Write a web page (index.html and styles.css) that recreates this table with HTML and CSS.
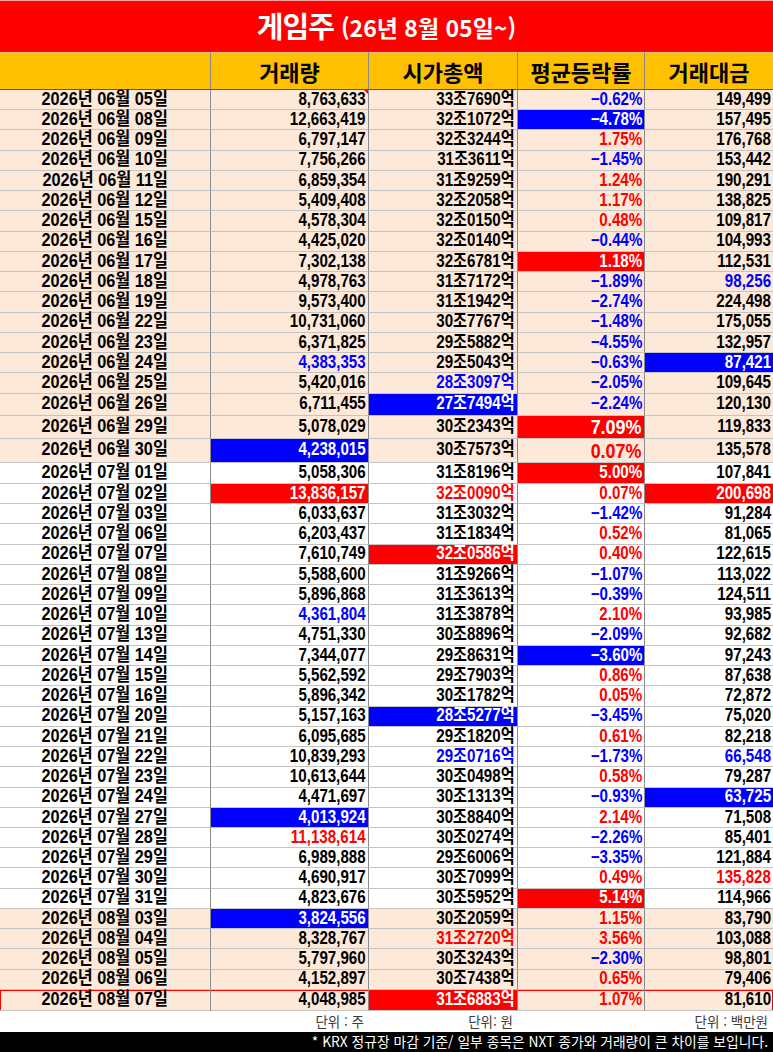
FILE: index.html
```html
<!DOCTYPE html>
<html lang="ko">
<head>
<meta charset="utf-8">
<title>게임주</title>
<link rel="stylesheet" href="styles.css">
</head>
<body>
<div class="sheet">
  <div class="title"><span class="t-main">게임주</span><span class="t-sub">(26년 8월 05일~)</span></div>
  <div class="row head"><div class="c"></div><div class="c">거래량</div><div class="c">시가총액</div><div class="c">평균등락률</div><div class="c">거래대금</div></div>

  <div class="row p"><div class="c d"><span>2026년 06월 05일</span></div><div class="c"><span>8,763,633</span><b class="note"></b></div><div class="c"><span>33조7690억</span></div><div class="c bt"><span>−0.62%</span></div><div class="c"><span>149,499</span></div></div>
  <div class="row p"><div class="c d"><span>2026년 06월 08일</span></div><div class="c"><span>12,663,419</span></div><div class="c"><span>32조1072억</span></div><div class="c bb"><span>−4.78%</span></div><div class="c"><span>157,495</span></div></div>
  <div class="row p"><div class="c d"><span>2026년 06월 09일</span></div><div class="c"><span>6,797,147</span></div><div class="c"><span>32조3244억</span></div><div class="c rt"><span>1.75%</span></div><div class="c"><span>176,768</span></div></div>
  <div class="row p"><div class="c d"><span>2026년 06월 10일</span></div><div class="c"><span>7,756,266</span></div><div class="c"><span>31조3611억</span></div><div class="c bt"><span>−1.45%</span></div><div class="c"><span>153,442</span></div></div>
  <div class="row p"><div class="c d"><span>2026년 06월 11일</span></div><div class="c"><span>6,859,354</span></div><div class="c"><span>31조9259억</span></div><div class="c rt"><span>1.24%</span></div><div class="c"><span>190,291</span></div></div>
  <div class="row p"><div class="c d"><span>2026년 06월 12일</span></div><div class="c"><span>5,409,408</span></div><div class="c"><span>32조2058억</span></div><div class="c rt"><span>1.17%</span></div><div class="c"><span>138,825</span></div></div>
  <div class="row p"><div class="c d"><span>2026년 06월 15일</span></div><div class="c"><span>4,578,304</span></div><div class="c"><span>32조0150억</span></div><div class="c rt"><span>0.48%</span></div><div class="c"><span>109,817</span></div></div>
  <div class="row p"><div class="c d"><span>2026년 06월 16일</span></div><div class="c"><span>4,425,020</span></div><div class="c"><span>32조0140억</span></div><div class="c bt"><span>−0.44%</span></div><div class="c"><span>104,993</span></div></div>
  <div class="row p"><div class="c d"><span>2026년 06월 17일</span></div><div class="c"><span>7,302,138</span></div><div class="c"><span>32조6781억</span></div><div class="c rb"><span>1.18%</span></div><div class="c"><span>112,531</span></div></div>
  <div class="row p"><div class="c d"><span>2026년 06월 18일</span></div><div class="c"><span>4,978,763</span></div><div class="c"><span>31조7172억</span></div><div class="c bt"><span>−1.89%</span></div><div class="c bt"><span>98,256</span></div></div>
  <div class="row p"><div class="c d"><span>2026년 06월 19일</span></div><div class="c"><span>9,573,400</span></div><div class="c"><span>31조1942억</span></div><div class="c bt"><span>−2.74%</span></div><div class="c"><span>224,498</span></div></div>
  <div class="row p"><div class="c d"><span>2026년 06월 22일</span></div><div class="c"><span>10,731,060</span></div><div class="c"><span>30조7767억</span></div><div class="c bt"><span>−1.48%</span></div><div class="c"><span>175,055</span></div></div>
  <div class="row p"><div class="c d"><span>2026년 06월 23일</span></div><div class="c"><span>6,371,825</span></div><div class="c"><span>29조5882억</span></div><div class="c bt"><span>−4.55%</span></div><div class="c"><span>132,957</span></div></div>
  <div class="row p"><div class="c d"><span>2026년 06월 24일</span></div><div class="c bt"><span>4,383,353</span></div><div class="c"><span>29조5043억</span></div><div class="c bt"><span>−0.63%</span></div><div class="c bb"><span>87,421</span></div></div>
  <div class="row p"><div class="c d"><span>2026년 06월 25일</span></div><div class="c"><span>5,420,016</span></div><div class="c bt"><span>28조3097억</span></div><div class="c bt"><span>−2.05%</span></div><div class="c"><span>109,645</span></div></div>
  <div class="row p h225"><div class="c d"><span>2026년 06월 26일</span></div><div class="c"><span>6,711,455</span></div><div class="c bb"><span>27조7494억</span></div><div class="c bt"><span>−2.24%</span></div><div class="c"><span>120,130</span></div></div>
  <div class="row p h225"><div class="c d"><span>2026년 06월 29일</span></div><div class="c"><span>5,078,029</span></div><div class="c"><span>30조2343억</span></div><div class="c rb big"><span>7.09%</span></div><div class="c"><span>119,833</span></div></div>
  <div class="row p h245"><div class="c d"><span>2026년 06월 30일</span></div><div class="c bb"><span>4,238,015</span></div><div class="c"><span>30조7573억</span></div><div class="c rt big"><span>0.07%</span></div><div class="c"><span>135,578</span></div></div>
  <div class="row h21"><div class="c d"><span>2026년 07월 01일</span></div><div class="c"><span>5,058,306</span></div><div class="c"><span>31조8196억</span></div><div class="c rb"><span>5.00%</span></div><div class="c"><span>107,841</span></div></div>
  <div class="row"><div class="c d"><span>2026년 07월 02일</span></div><div class="c rb"><span>13,836,157</span></div><div class="c rt"><span>32조0090억</span></div><div class="c rt"><span>0.07%</span></div><div class="c rb"><span>200,698</span></div></div>
  <div class="row"><div class="c d"><span>2026년 07월 03일</span></div><div class="c"><span>6,033,637</span></div><div class="c"><span>31조3032억</span></div><div class="c bt"><span>−1.42%</span></div><div class="c"><span>91,284</span></div></div>
  <div class="row"><div class="c d"><span>2026년 07월 06일</span></div><div class="c"><span>6,203,437</span></div><div class="c"><span>31조1834억</span></div><div class="c rt"><span>0.52%</span></div><div class="c"><span>81,065</span></div></div>
  <div class="row"><div class="c d"><span>2026년 07월 07일</span></div><div class="c"><span>7,610,749</span></div><div class="c rb"><span>32조0586억</span></div><div class="c rt"><span>0.40%</span></div><div class="c"><span>122,615</span></div></div>
  <div class="row"><div class="c d"><span>2026년 07월 08일</span></div><div class="c"><span>5,588,600</span></div><div class="c"><span>31조9266억</span></div><div class="c bt"><span>−1.07%</span></div><div class="c"><span>113,022</span></div></div>
  <div class="row"><div class="c d"><span>2026년 07월 09일</span></div><div class="c"><span>5,896,868</span></div><div class="c"><span>31조3613억</span></div><div class="c bt"><span>−0.39%</span></div><div class="c"><span>124,511</span></div></div>
  <div class="row"><div class="c d"><span>2026년 07월 10일</span></div><div class="c bt"><span>4,361,804</span></div><div class="c"><span>31조3878억</span></div><div class="c rt"><span>2.10%</span></div><div class="c"><span>93,985</span></div></div>
  <div class="row"><div class="c d"><span>2026년 07월 13일</span></div><div class="c"><span>4,751,330</span></div><div class="c"><span>30조8896억</span></div><div class="c bt"><span>−2.09%</span></div><div class="c"><span>92,682</span></div></div>
  <div class="row"><div class="c d"><span>2026년 07월 14일</span></div><div class="c"><span>7,344,077</span></div><div class="c"><span>29조8631억</span></div><div class="c bb"><span>−3.60%</span></div><div class="c"><span>97,243</span></div></div>
  <div class="row"><div class="c d"><span>2026년 07월 15일</span></div><div class="c"><span>5,562,592</span></div><div class="c"><span>29조7903억</span></div><div class="c rt"><span>0.86%</span></div><div class="c"><span>87,638</span></div></div>
  <div class="row"><div class="c d"><span>2026년 07월 16일</span></div><div class="c"><span>5,896,342</span></div><div class="c"><span>30조1782억</span></div><div class="c rt"><span>0.05%</span></div><div class="c"><span>72,872</span></div></div>
  <div class="row"><div class="c d"><span>2026년 07월 20일</span></div><div class="c"><span>5,157,163</span></div><div class="c bb"><span>28조5277억</span></div><div class="c bt"><span>−3.45%</span></div><div class="c"><span>75,020</span></div></div>
  <div class="row"><div class="c d"><span>2026년 07월 21일</span></div><div class="c"><span>6,095,685</span></div><div class="c"><span>29조1820억</span></div><div class="c rt"><span>0.61%</span></div><div class="c"><span>82,218</span></div></div>
  <div class="row"><div class="c d"><span>2026년 07월 22일</span></div><div class="c"><span>10,839,293</span></div><div class="c bt"><span>29조0716억</span></div><div class="c bt"><span>−1.73%</span></div><div class="c bt"><span>66,548</span></div></div>
  <div class="row"><div class="c d"><span>2026년 07월 23일</span></div><div class="c"><span>10,613,644</span></div><div class="c"><span>30조0498억</span></div><div class="c rt"><span>0.58%</span></div><div class="c"><span>79,287</span></div></div>
  <div class="row"><div class="c d"><span>2026년 07월 24일</span></div><div class="c"><span>4,471,697</span></div><div class="c"><span>30조1313억</span></div><div class="c bt"><span>−0.93%</span></div><div class="c bb"><span>63,725</span></div></div>
  <div class="row"><div class="c d"><span>2026년 07월 27일</span></div><div class="c bb"><span>4,013,924</span></div><div class="c"><span>30조8840억</span></div><div class="c rt"><span>2.14%</span></div><div class="c"><span>71,508</span></div></div>
  <div class="row"><div class="c d"><span>2026년 07월 28일</span></div><div class="c rt"><span>11,138,614</span></div><div class="c"><span>30조0274억</span></div><div class="c bt"><span>−2.26%</span></div><div class="c"><span>85,401</span></div></div>
  <div class="row"><div class="c d"><span>2026년 07월 29일</span></div><div class="c"><span>6,989,888</span></div><div class="c"><span>29조6006억</span></div><div class="c bt"><span>−3.35%</span></div><div class="c"><span>121,884</span></div></div>
  <div class="row"><div class="c d"><span>2026년 07월 30일</span></div><div class="c"><span>4,690,917</span></div><div class="c"><span>30조7099억</span></div><div class="c rt"><span>0.49%</span></div><div class="c rt"><span>135,828</span></div></div>
  <div class="row"><div class="c d"><span>2026년 07월 31일</span></div><div class="c"><span>4,823,676</span></div><div class="c"><span>30조5952억</span></div><div class="c rb"><span>5.14%</span></div><div class="c"><span>114,966</span></div></div>
  <div class="row p"><div class="c d"><span>2026년 08월 03일</span></div><div class="c bb"><span>3,824,556</span></div><div class="c"><span>30조2059억</span></div><div class="c rt"><span>1.15%</span></div><div class="c"><span>83,790</span></div></div>
  <div class="row p"><div class="c d"><span>2026년 08월 04일</span></div><div class="c"><span>8,328,767</span></div><div class="c rt"><span>31조2720억</span></div><div class="c rt"><span>3.56%</span></div><div class="c"><span>103,088</span></div></div>
  <div class="row p"><div class="c d"><span>2026년 08월 05일</span></div><div class="c"><span>5,797,960</span></div><div class="c"><span>30조3243억</span></div><div class="c bt"><span>−2.30%</span></div><div class="c"><span>98,801</span></div></div>
  <div class="row p"><div class="c d"><span>2026년 08월 06일</span></div><div class="c"><span>4,152,897</span></div><div class="c"><span>30조7438억</span></div><div class="c rt"><span>0.65%</span></div><div class="c"><span>79,406</span></div></div>
  <div class="row p h21 last"><div class="c d"><span>2026년 08월 07일</span></div><div class="c"><span>4,048,985</span></div><div class="c rb"><span>31조6883억</span></div><div class="c rt"><span>1.07%</span></div><div class="c"><span>81,610</span></div></div>

  <div class="row units"><div class="u"></div><div class="u">단위 : 주</div><div class="u">단위: 원</div><div class="u"></div><div class="u">단위 : 백만원</div></div>
  <div class="notice">* KRX 정규장 마감 기준/ 일부 종목은 NXT 종가와 거래량이 큰 차이를 보입니다.</div>
</div>
</body>
</html>
```

FILE: styles.css
```css
html, body {
  margin: 0;
  padding: 0;
  background: #ffffff;
}

body {
  font-family: "Liberation Sans", "Noto Sans CJK KR", sans-serif;
  color: #000;
}

.sheet {
  width: 773px;
}

.title {
  height: 52px;
  background: #ff0000;
  color: #ffffff;
  display: flex;
  align-items: center;
  justify-content: center;
  gap: 7px;
  box-sizing: border-box;
  border-top: 1px solid #f4a0a0;
  padding-bottom: 2px;
}

.t-main {
  font-family: "Noto Sans CJK KR", sans-serif;
  font-weight: 700;
  font-size: 29px;
  line-height: 1;
  letter-spacing: -1px;
}

.t-sub {
  font-family: "Noto Sans CJK KR", sans-serif;
  font-weight: 700;
  font-size: 23px;
  line-height: 1;
  padding-top: 3px;
}

.row {
  display: grid;
  grid-template-columns: 211px 158px 149px 127px 128px;
  height: 20.24px;
}

.c {
  position: relative;
  box-sizing: border-box;
  border-right: 1px solid #8a8a8a;
  border-bottom: 1px solid #c4c4c4;
  display: flex;
  align-items: center;
  justify-content: flex-end;
  padding-right: 2px;
  font-size: 17.7px;
  font-weight: 700;
  line-height: 1;
  white-space: nowrap;
}

.c > span {
  display: inline-block;
  transform: scaleX(0.855);
  transform-origin: 100% 50%;
}

.c:last-child {
  border-right: none;
}

.d {
  justify-content: center;
  padding-right: 0;
}

.d > span {
  transform-origin: 50% 50%;
  transform: scaleX(0.92);
}

.head {
  height: 38px;
  background: #ffc000;
}

.head .c {
  justify-content: center;
  font-family: "Noto Sans CJK KR", sans-serif;
  font-size: 22px;
  font-weight: 700;
  border-top: 1px solid #e8c070;
  border-bottom: 1px solid #555555;
  padding: 0 0 1px 0;
}

.p {
  background: #fde9d9;
}

.h225 { height: 22.5px; }
.h245 { height: 24.5px; }
.h21 { height: 21px; }

.bt { color: #0000ff; }
.rt { color: #ff0000; }
.bb { background: #0000ff; color: #ffffff; }
.rb { background: #ff0000; color: #ffffff; }
.big { font-size: 21px; }

.last {
  outline: 1px solid #ff0000;
  outline-offset: -1px;
}

.note {
  position: absolute;
  top: 0;
  right: 0;
  width: 0;
  height: 0;
  border-top: 4px solid #ff0000;
  border-left: 4px solid transparent;
}

.units {
  height: 21px;
}

.u {
  display: flex;
  align-items: center;
  justify-content: flex-end;
  padding-right: 5px;
  font-family: "Noto Sans CJK KR", sans-serif;
  font-size: 13.5px;
  line-height: 1;
  color: #3a3a3a;
}

.notice {
  height: 20px;
  background: #000000;
  color: #ffffff;
  font-family: "Noto Sans CJK KR", sans-serif;
  font-size: 13.8px;
  line-height: 1;
  display: flex;
  align-items: center;
  justify-content: flex-end;
  padding-right: 5px;
}
```
